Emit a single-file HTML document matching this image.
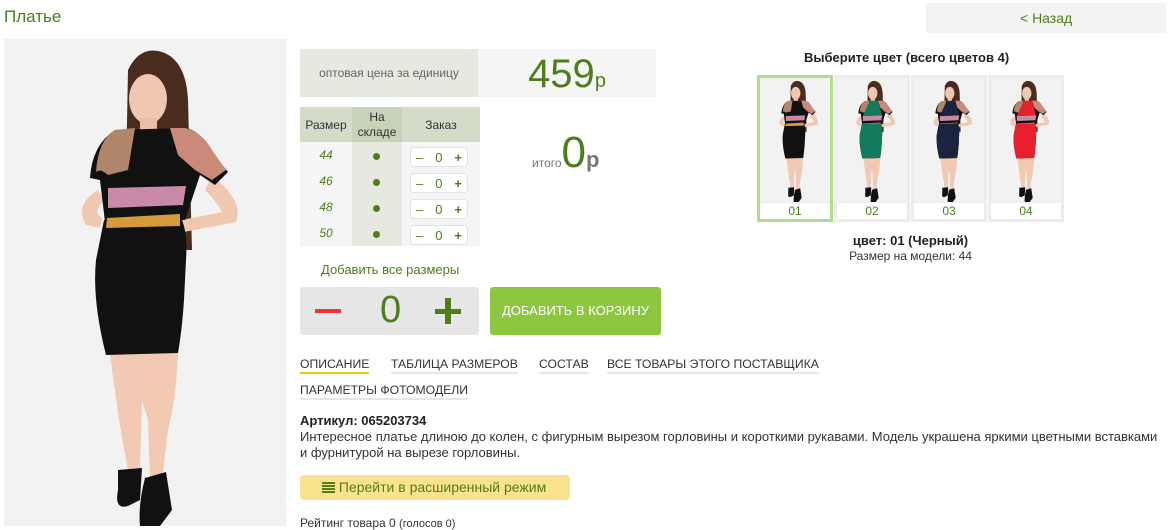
<!DOCTYPE html>
<html><head><meta charset="utf-8">
<style>
*{margin:0;padding:0;box-sizing:border-box}
body{width:1169px;height:526px;overflow:hidden;background:#fff;font-family:"Liberation Sans","DejaVu Sans",sans-serif;color:#333;position:relative}
.a{position:absolute}
.g{color:#4f7d1c}
.cnt{position:absolute;left:410px;width:58px;height:20px;background:#fff;border:1px solid #e2e2e2;border-radius:4px;font-size:13px;color:#4f7d1c;display:flex;justify-content:space-between;align-items:center;padding:0 5px}
.th{position:absolute;top:75px;width:76px;height:147px;background:#eee;border:3px solid #ececec}
.th .im{position:absolute;left:0;top:0;width:70px;height:124px;background:#f3f3f3;overflow:hidden}
.th .lb{position:absolute;left:0;top:125px;width:70px;height:16px;background:#fff;text-align:center;font-size:12px;color:#4f7d1c;line-height:16px}
.tab{position:absolute;font-size:12.2px;color:#333;border-bottom:2px solid #e6e6e6;padding-bottom:1px}
</style></head><body>
<svg width="0" height="0" style="position:absolute">
<defs>
<g id="fig">
<rect x="4" y="39" width="282" height="487" fill="#f2f2f2"/>
<path d="M128 70 Q140 45 162 52 Q186 60 188 100 L192 250 L172 250 L165 130 L135 130 L126 175 Z" fill="#4a2c1f"/>
<ellipse cx="148" cy="99" rx="19" ry="25" fill="#f0c8b2"/>
<rect x="140" y="118" width="17" height="18" fill="#ecbfa8"/>
<path d="M98 190 Q74 205 86 225 L100 228 L102 218 Q92 212 104 200Z" fill="#f0c8b2"/>
<path d="M212 176 Q244 200 236 222 L184 232 L182 220 L222 212 Q214 198 205 190Z" fill="#f0c8b2"/>
<path d="M110 353 L178 353 Q176 400 168 430 L162 480 L150 480 L148 420 L142 400 L140 470 L128 470 Q118 420 110 353Z" fill="#f2c9b3"/>
<path d="M118 470 L142 468 L140 500 L128 506 Q114 510 118 490Z" fill="#111"/>
<path d="M145 478 L166 472 L172 510 L160 526 L140 526 Q138 505 145 478Z" fill="#111"/>
<path d="M115 130 L185 128 Q200 130 210 150 L228 172 L215 185 L200 175 L185 220 L105 222 L100 180 L90 178 Q92 145 115 130Z" fill="#111"/>
<path d="M115 130 L135 128 L128 170 L108 175 Q100 168 96 172 Q98 140 115 130Z" fill="#b0866a"/>
<path d="M170 128 L185 128 Q202 132 212 150 L226 170 L212 180 L195 170 L178 155Z" fill="#c98a7a"/>
<path d="M108 188 L186 186 L183 205 L108 208Z" fill="#c98aa8"/>
<path d="M104 220 L180 216 Q188 230 186 260 L184 300 Q182 330 178 353 L106 355 Q92 300 96 260Z" fill="#111"/>
<path d="M107 218 L180 214 L180 226 L106 228Z" fill="#d49a3c"/>
</g>
</defs>
</svg>

<div class="a g" style="left:4px;top:7px;font-size:17px;color:#4f7d1c">Платье</div>
<div class="a" style="left:926px;top:3px;width:240px;height:30px;background:#f3f3f3;font-size:14px;color:#4f7d1c;line-height:30px;padding-left:94px">&lt; Назад</div>

<svg class="a" style="left:4px;top:39px" width="282" height="487" viewBox="4 39 282 487"><use href="#fig"/></svg>

<div class="a" style="left:300px;top:49px;width:178px;height:48px;background:#e6e9e0;font-size:12px;color:#666;text-align:center;line-height:48px">оптовая цена за единицу</div>
<div class="a" style="left:478px;top:49px;width:178px;height:48px;background:#f5f5f5;text-align:center;color:#4f7d1c"><span style="font-size:40px;line-height:50px">459</span><span style="font-size:20px">р</span></div>

<div class="a" style="left:300px;top:107px;width:180px;height:139px;background:#f5f5f5"></div>
<div class="a" style="left:300px;top:107px;width:180px;height:35px;background:#d3dcc8"></div>
<div class="a" style="left:352px;top:107px;width:50px;height:35px;background:#c6d3b9"></div>
<div class="a" style="left:352px;top:142px;width:50px;height:104px;background:#e6e9e0"></div>
<div class="a" style="left:300px;top:118px;width:52px;text-align:center;font-size:12px">Размер</div>
<div class="a" style="left:352px;top:110px;width:50px;text-align:center;font-size:12px;line-height:15px">На<br>складе</div>
<div class="a" style="left:402px;top:118px;width:78px;text-align:center;font-size:12px">Заказ</div>

<div class="a g" style="left:300px;top:148px;width:52px;text-align:center;font-size:12px;font-style:italic">44</div>
<div class="a g" style="left:300px;top:174px;width:52px;text-align:center;font-size:12px;font-style:italic">46</div>
<div class="a g" style="left:300px;top:200px;width:52px;text-align:center;font-size:12px;font-style:italic">48</div>
<div class="a g" style="left:300px;top:226px;width:52px;text-align:center;font-size:12px;font-style:italic">50</div>
<div class="a" style="left:373px;top:153px;width:7px;height:7px;border-radius:50%;background:#4f7d1c"></div>
<div class="a" style="left:373px;top:179px;width:7px;height:7px;border-radius:50%;background:#4f7d1c"></div>
<div class="a" style="left:373px;top:205px;width:7px;height:7px;border-radius:50%;background:#4f7d1c"></div>
<div class="a" style="left:373px;top:231px;width:7px;height:7px;border-radius:50%;background:#4f7d1c"></div>
<div class="cnt" style="top:147px"><span>–</span><span>0</span><span style="font-weight:bold">+</span></div>
<div class="cnt" style="top:173px"><span>–</span><span>0</span><span style="font-weight:bold">+</span></div>
<div class="cnt" style="top:199px"><span>–</span><span>0</span><span style="font-weight:bold">+</span></div>
<div class="cnt" style="top:225px"><span>–</span><span>0</span><span style="font-weight:bold">+</span></div>

<div class="a" style="left:532px;top:128px;white-space:nowrap"><span style="font-size:12px;color:#777">итого</span><span style="font-size:44px;color:#4f7d1c">0</span><span style="font-size:22px;color:#777;font-weight:bold">р</span></div>

<div class="a g" style="left:321px;top:262px;font-size:13px">Добавить все размеры</div>
<div class="a" style="left:300px;top:287px;width:179px;height:48px;background:#e6e6e6;border-radius:3px"></div>
<div class="a" style="left:315px;top:309px;width:26px;height:4px;background:#e53935"></div>
<div class="a g" style="left:380px;top:289px;font-size:38px">0</div>
<div class="a" style="left:435px;top:309px;width:26px;height:5px;background:#4f7d1c"></div>
<div class="a" style="left:445px;top:298px;width:6px;height:26px;background:#4f7d1c"></div>
<div class="a" style="left:490px;top:287px;width:171px;height:48px;background:#8dc63f;border-radius:3px;color:#fff;font-size:13px;text-align:center;line-height:48px">ДОБАВИТЬ В КОРЗИНУ</div>

<div class="tab" style="left:300px;top:357px;border-color:#f0c419">ОПИСАНИЕ</div>
<div class="tab" style="left:391px;top:357px">ТАБЛИЦА РАЗМЕРОВ</div>
<div class="tab" style="left:539px;top:357px">СОСТАВ</div>
<div class="tab" style="left:607px;top:357px">ВСЕ ТОВАРЫ ЭТОГО ПОСТАВЩИКА</div>
<div class="tab" style="left:300px;top:383px">ПАРАМЕТРЫ ФОТОМОДЕЛИ</div>

<div class="a" style="left:300px;top:413px;font-size:13px;font-weight:bold;color:#222">Артикул: 065203734</div>
<div class="a" style="left:300px;top:429px;width:880px;font-size:13px;line-height:16px;color:#333;white-space:nowrap">Интересное платье длиною до колен, с фигурным вырезом горловины и короткими рукавами. Модель украшена яркими цветными вставками<br>и фурнитурой на вырезе горловины.</div>
<div class="a" style="left:300px;top:475px;width:270px;height:25px;background:#fbe38e;border-radius:4px;font-size:14px;color:#4f7d1c;line-height:25px;padding-left:22px">
<span style="display:inline-block;width:13px;height:11px;vertical-align:-1px;background:repeating-linear-gradient(#4f7d1c 0 2px,transparent 2px 3px)"></span> Перейти в расширенный режим</div>
<div class="a" style="left:300px;top:516px;font-size:12px">Рейтинг товара 0 <span style="font-size:11px">(голосов 0)</span></div>

<div class="a" style="left:804px;top:50px;font-size:13px;font-weight:bold;color:#222">Выберите цвет (всего цветов 4)</div>
<div class="th" style="left:757px;border-color:#b7db8c"><div class="im"><svg width="70" height="124" viewBox="4 39 282 487" preserveAspectRatio="none"><use href="#fig"/></svg></div><div class="lb">01</div></div>
<div class="th" style="left:834px"><div class="im"><svg width="70" height="124" viewBox="4 39 282 487" preserveAspectRatio="none"><use href="#fig"/><path d="M104 220 L180 216 Q188 230 186 260 L184 300 Q182 330 178 353 L106 355 Q92 300 96 260Z M135 130 L170 128 L185 186 L108 188Z" fill="#147a5e"/></svg></div><div class="lb">02</div></div>
<div class="th" style="left:911px"><div class="im"><svg width="70" height="124" viewBox="4 39 282 487" preserveAspectRatio="none"><use href="#fig"/><path d="M104 220 L180 216 Q188 230 186 260 L184 300 Q182 330 178 353 L106 355 Q92 300 96 260Z M135 130 L170 128 L185 186 L108 188Z" fill="#1b2340"/></svg></div><div class="lb">03</div></div>
<div class="th" style="left:988px"><div class="im"><svg width="70" height="124" viewBox="4 39 282 487" preserveAspectRatio="none"><use href="#fig"/><path d="M104 220 L180 216 Q188 230 186 260 L184 300 Q182 330 178 353 L106 355 Q92 300 96 260Z M135 130 L170 128 L185 186 L108 188Z" fill="#e8202e"/></svg></div><div class="lb">04</div></div>

<div class="a" style="left:757px;top:233px;width:307px;text-align:center;font-size:13px;font-weight:bold;color:#222">цвет: 01 (Черный)</div>
<div class="a" style="left:757px;top:249px;width:307px;text-align:center;font-size:12px;color:#333">Размер на модели: 44</div>
</body></html>
